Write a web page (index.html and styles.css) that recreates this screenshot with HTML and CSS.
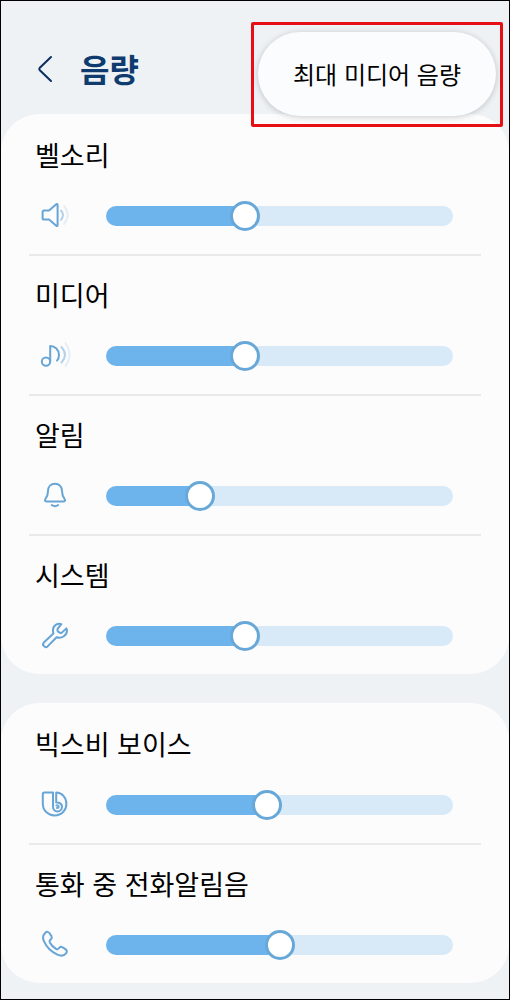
FILE: index.html
```
<!DOCTYPE html>
<html lang="ko">

<head>
    <meta charset="UTF-8">
    <meta name="viewport" content="width=device-width, initial-scale=1.0">
    <title>음량</title>
    <link rel="stylesheet" href="styles.css">
</head>

<body>
    <div class="screen">
        <header class="header">
            <button class="back" type="button" aria-label="뒤로">
                <svg width="16" height="28" viewBox="0 0 16 28">
                    <path d="M14 2 L2.6 13 Q1.8 14 2.6 15 L14 26" />
                </svg>
            </button>
            <h1>음량</h1>
            <div class="highlight">
                <button class="menu-item" type="button">최대 미디어 음량</button>
            </div>
        </header>

        <main>
            <section class="card">
                <div class="row">
                    <label for="ringtone">벨소리</label>
                    <div class="control">
                        <svg class="icon" viewBox="0 0 28 28">
                            <path d="M3 8.5 Q1.6 8.5 1.6 10 V16 Q1.6 17.6 3 17.6 H8 L15 23.6 Q16.6 24.6 16.6 23 V3 Q16.6 1.4 15 2.4 L8 8.5 Z" />
                            <path class="soft" d="M20 8.5 Q24 13 20 17.8" />
                            <path class="faint" d="M23 4 Q30.5 13 23 22" />
                        </svg>
                        <input type="range" id="ringtone" min="0" max="100" value="39" style="--value: 39%">
                    </div>
                </div>
                <div class="row">
                    <label for="media">미디어</label>
                    <div class="control">
                        <svg class="icon" viewBox="0 0 28 28">
                            <circle cx="5" cy="19.6" r="4.2" />
                            <path d="M9.2 19.6 V4 C14 4 18 7.5 18 13 Q18 16.5 16 18.6" />
                            <path class="soft" d="M20.5 5 Q27.5 13 20.5 20.5" />
                            <path class="faint" d="M24.5 1 Q32.5 13 24.5 24" />
                        </svg>
                        <input type="range" id="media" min="0" max="100" value="39" style="--value: 39%">
                    </div>
                </div>
                <div class="row">
                    <label for="notification">알림</label>
                    <div class="control">
                        <svg class="icon" viewBox="0 0 28 28">
                            <path d="M14 1.8 C9.5 1.8 7 5 7 9 C7 13.5 6.2 14.6 4.4 17 C3.4 18.6 4 19.4 5.4 19.4 H22.6 C24 19.4 24.6 18.6 23.6 17 C21.8 14.6 21 13.5 21 9 C21 5 18.5 1.8 14 1.8 Z" />
                            <path d="M10.8 23 Q14 25.4 17.2 23" />
                        </svg>
                        <input type="range" id="notification" min="0" max="100" value="25" style="--value: 25%">
                    </div>
                </div>
                <div class="row">
                    <label for="system">시스템</label>
                    <div class="control">
                        <svg class="icon" viewBox="0 0 28 28">
                            <path d="M20.4 2.2 C16.5 1 12 3.5 12 8 Q12 10 12.4 11.6 L2.8 20.6 C0.6 22.8 4 26.6 6.6 24.4 L15.6 15.2 C21 17 26 13 26 8.4 Q26 7.4 25.4 6.4 L21.2 10.4 Q20.4 11.2 19.4 10.8 L17.6 10 Q16.4 9.4 16.4 7.8 Q16.4 6.8 17.2 6 Z" />
                        </svg>
                        <input type="range" id="system" min="0" max="100" value="39" style="--value: 39%">
                    </div>
                </div>
            </section>

            <section class="card">
                <div class="row">
                    <label for="bixby">빅스비 보이스</label>
                    <div class="control">
                        <svg class="icon" viewBox="0 0 28 28">
                            <path d="M12 1.6 H3.2 Q1.8 1.6 1.8 3.2 V12.5 C1.8 19.5 7 24.4 13.6 24.4 C20.5 24.4 25.4 19 25.4 13 C25.4 6.6 21 1.6 15.2 1.6 V11.4 C19 11.2 21 13.4 21 15.8 C21 18.4 19 20.4 16.4 20.4 C13.8 20.4 12 18.4 12 15.8 Z" />
                            <path d="M15.4 14.6 Q17.6 14.2 17.6 15.8 Q17.4 17.2 16 17" />
                        </svg>
                        <input type="range" id="bixby" min="0" max="100" value="46" style="--value: 46%">
                    </div>
                </div>
                <div class="row">
                    <label for="call">통화 중 전화알림음</label>
                    <div class="control">
                        <svg class="icon" viewBox="0 0 28 28">
                            <path d="M4.2 2 C5.6 0.4 7.4 0.6 8.4 2 L10.4 5 Q11.4 6.8 10 8.2 L9 9.2 Q8.2 10.2 8.8 11.4 Q11 15.4 15 17.8 Q16.4 18.6 17.4 17.6 L18.6 16.4 Q19.8 15.4 21.2 16.2 L24.4 18.2 C26.2 19.4 26.2 21 25 22.4 C23 24.8 19.8 25.2 16.4 23.6 C10.4 20.8 5.4 15.8 2.8 9.8 C1.4 6.6 2 4 4.2 2 Z" />
                        </svg>
                        <input type="range" id="call" min="0" max="100" value="50" style="--value: 50%">
                    </div>
                </div>
            </section>
        </main>
    </div>
    <script>
        document.querySelectorAll('input[type="range"]').forEach(function (slider) {
            slider.addEventListener('input', function () {
                slider.style.setProperty('--value', slider.value + '%');
            });
        });
    </script>
</body>

</html>
```
FILE: styles.css
```
* {
    box-sizing: border-box;
}

body {
    margin: 0;
    font-family: "Noto Sans CJK KR", sans-serif;
    background-color: #eef2f5;
    color: #000;
}

.screen {
    min-height: 100vh;
    border: 1px solid #000;
}

.header {
    position: relative;
    display: flex;
    align-items: center;
    gap: 27px;
    padding: 44px 36px 21px;
}

.back {
    display: flex;
    padding: 0;
    background: none;
    border: none;
    cursor: pointer;
}

.back svg {
    fill: none;
    stroke: #0b2f62;
    stroke-width: 2;
    stroke-linecap: round;
}

h1 {
    margin: 0;
    padding-bottom: 2px;
    font-size: 32px;
    line-height: 46px;
    font-weight: 700;
    color: #0f3b6f;
}

/* Popup menu over the header, framed in red */
.highlight {
    position: absolute;
    top: 21px;
    right: 6px;
    padding: 7px 4px 8px;
    border: 3px solid #e60f14;
    border-radius: 2px;
}

.menu-item {
    display: block;
    padding: 24px 35px;
    font-family: inherit;
    font-size: 24px;
    line-height: 36px;
    color: #000;
    background-color: #fbfcfe;
    border: none;
    border-radius: 42px;
    box-shadow: 0 1px 6px rgba(0, 0, 0, 0.2);
    cursor: pointer;
}

.card {
    margin-bottom: 29px;
    padding: 0 28px;
    background-color: #fcfcfd;
    border-radius: 38px;
}

.card:last-child {
    margin-bottom: 16px;
}

.row {
    padding: 21px 0 22px;
}

.row + .row {
    padding-top: 19px;
    border-top: 2px solid #e9eaeb;
}

label {
    display: block;
    padding-left: 6px;
    font-size: 27px;
    line-height: 40px;
}

.control {
    display: flex;
    align-items: center;
    gap: 37px;
    margin-top: 25px;
    padding: 0 28px 0 12px;
}

.icon {
    flex: none;
    width: 28px;
    height: 28px;
    overflow: visible;
    fill: none;
    stroke: #66a5d6;
    stroke-width: 2;
    stroke-linecap: round;
    stroke-linejoin: round;
}

.soft {
    stroke: #b4d0e8;
}

.faint {
    stroke: #e6eef7;
}

input[type="range"] {
    -webkit-appearance: none;
    appearance: none;
    flex: 1;
    min-width: 0;
    height: 32px;
    margin: 0;
    background: none;
    cursor: pointer;
}

input[type="range"]::-webkit-slider-runnable-track {
    height: 20px;
    border-radius: 10px;
    background: linear-gradient(90deg, #6db4ed var(--value), #d8e9f7 var(--value));
}

input[type="range"]::-webkit-slider-thumb {
    -webkit-appearance: none;
    width: 30px;
    height: 30px;
    margin-top: -5px;
    background-color: #fff;
    border: 3px solid #67a8d9;
    border-radius: 50%;
}
```
